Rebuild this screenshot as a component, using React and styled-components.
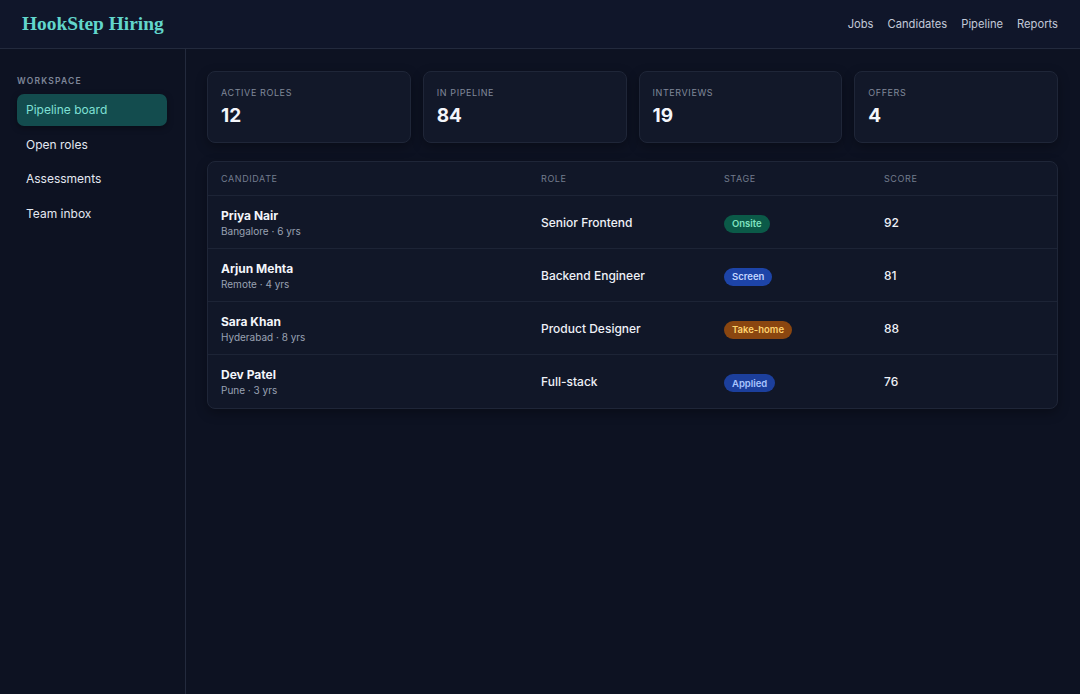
import React from 'react';
import styled, { createGlobalStyle } from 'styled-components';

const GlobalStyle = createGlobalStyle`
  html, body {
    margin: 0;
    padding: 0;
    background: #0d1222;
    font-family: Inter, "Noto Sans", sans-serif;
    color: #e8ecf4;
  }
  * { box-sizing: border-box; }
`;

const STATS = [
  { label: 'Active roles', value: '12' },
  { label: 'In pipeline', value: '84' },
  { label: 'Interviews', value: '19' },
  { label: 'Offers', value: '4' },
];

const CANDIDATES = [
  { name: 'Priya Nair', meta: 'Bangalore · 6 yrs', role: 'Senior Frontend', stage: 'Onsite', score: 92 },
  { name: 'Arjun Mehta', meta: 'Remote · 4 yrs', role: 'Backend Engineer', stage: 'Screen', score: 81 },
  { name: 'Sara Khan', meta: 'Hyderabad · 8 yrs', role: 'Product Designer', stage: 'Take-home', score: 88 },
  { name: 'Dev Patel', meta: 'Pune · 3 yrs', role: 'Full-stack', stage: 'Applied', score: 76 },
];

const STAGE_COLORS = {
  Onsite: { bg: '#0b5a48', fg: '#7fe3c0' },
  Screen: { bg: '#1d44a8', fg: '#c3d6ff' },
  'Take-home': { bg: '#8a4610', fg: '#ffd36e' },
  Applied: { bg: '#1c3f9c', fg: '#a9c5ff' },
};

const NAV = ['Pipeline board', 'Open roles', 'Assessments', 'Team inbox'];

const App = () => {
  return (
    <>
      <GlobalStyle />
      <Page>
        <TopBar>
          <Brand>HookStep Hiring</Brand>
          <TopNav>
            <TopLink>Jobs</TopLink>
            <TopLink>Candidates</TopLink>
            <TopLink>Pipeline</TopLink>
            <TopLink>Reports</TopLink>
          </TopNav>
        </TopBar>

        <Body>
          <Sidebar>
            <SideLabel>Workspace</SideLabel>
            {NAV.map((item, i) => (
              <SideItem key={item} $active={i === 0}>{item}</SideItem>
            ))}
          </Sidebar>

          <Main>
            <StatGrid>
              {STATS.map((s) => (
                <StatCard key={s.label}>
                  <StatLabel>{s.label}</StatLabel>
                  <StatValue>{s.value}</StatValue>
                </StatCard>
              ))}
            </StatGrid>

            <Table>
              <HeadRow>
                <HeadCell>Candidate</HeadCell>
                <HeadCell>Role</HeadCell>
                <HeadCell>Stage</HeadCell>
                <HeadCell>Score</HeadCell>
              </HeadRow>
              {CANDIDATES.map((c) => (
                <Row key={c.name}>
                  <div>
                    <Name>{c.name}</Name>
                    <Meta>{c.meta}</Meta>
                  </div>
                  <Cell>{c.role}</Cell>
                  <div>
                    <Badge $stage={c.stage}>{c.stage}</Badge>
                  </div>
                  <Cell>{c.score}</Cell>
                </Row>
              ))}
            </Table>
          </Main>
        </Body>
      </Page>
    </>
  );
};

const Page = styled.div`
  min-height: 694px;
  display: flex;
  flex-direction: column;
`;

const TopBar = styled.header`
  height: 49px;
  display: flex;
  align-items: center;
  justify-content: space-between;
  padding: 0 22px;
  background: #10162a;
  border-bottom: 1px solid #232a3d;
`;

const Brand = styled.div`
  font-family: "Liberation Serif", "DejaVu Serif", serif;
  font-weight: 700;
  font-size: 19.4px;
  color: #62d6cc;
`;

const TopNav = styled.nav`
  display: flex;
  gap: 14px;
`;

const TopLink = styled.a`
  font-size: 11.2px;
  color: #c2c9d8;
`;

const Body = styled.div`
  flex: 1;
  display: flex;
`;

const Sidebar = styled.aside`
  width: 186px;
  flex-shrink: 0;
  border-right: 1px solid #232a3d;
  padding: 27px 18px 0 17px;
  display: flex;
  flex-direction: column;
  gap: 2.5px;
  min-height: 645px;
`;

const SideLabel = styled.div`
  font-size: 8.5px;
  font-weight: 600;
  letter-spacing: 1.2px;
  text-transform: uppercase;
  color: #7e8699;
  margin-bottom: 5px;
`;

const SideItem = styled.div`
  height: 32px;
  display: flex;
  align-items: center;
  padding: 0 9px;
  border-radius: 7px;
  font-size: 12px;
  color: ${(p) => (p.$active ? '#7fe0d5' : '#e3e8f1')};
  background: ${(p) => (p.$active ? '#134c4e' : 'transparent')};
  box-shadow: ${(p) => (p.$active ? '0 2px 6px rgba(0,0,0,0.35)' : 'none')};
`;

const Main = styled.main`
  flex: 1;
  padding: 22px 22px 0 21px;
  display: flex;
  flex-direction: column;
  gap: 18px;
`;

const StatGrid = styled.div`
  display: grid;
  grid-template-columns: repeat(4, 1fr);
  gap: 12px;
`;

const StatCard = styled.div`
  height: 72px;
  padding: 15px 13px 0;
  background: #121829;
  border: 1px solid #1f2638;
  border-radius: 8px;
  box-shadow: 0 4px 12px rgba(0,0,0,0.3);
`;

const StatLabel = styled.div`
  font-size: 9px;
  letter-spacing: 0.6px;
  text-transform: uppercase;
  color: #808899;
`;

const StatValue = styled.div`
  margin-top: 6px;
  font-size: 19px;
  font-weight: 700;
  color: #f4f6fb;
`;

const Table = styled.div`
  background: #111728;
  border: 1px solid #1f2638;
  border-radius: 8px;
  box-shadow: 0 4px 12px rgba(0,0,0,0.3);
  overflow: hidden;
`;

const columns = `
  display: grid;
  grid-template-columns: 320px 183px 160px 1fr;
  align-items: center;
  padding: 0 13px;
`;

const HeadRow = styled.div`
  ${columns}
  height: 34px;
  border-bottom: 1px solid #1d2436;
`;

const HeadCell = styled.div`
  font-size: 9px;
  letter-spacing: 0.6px;
  text-transform: uppercase;
  color: #737c8e;
`;

const Row = styled.div`
  ${columns}
  height: 53px;
  border-bottom: 1px solid #1d2436;
  &:last-child { border-bottom: none; }
`;

const Name = styled.div`
  font-size: 12px;
  font-weight: 700;
  color: #f3f5fa;
`;

const Meta = styled.div`
  margin-top: 2px;
  font-size: 10px;
  color: #9aa2b3;
`;

const Cell = styled.div`
  font-size: 12px;
  font-weight: 500;
  color: #eef1f7;
`;

const Badge = styled.span`
  display: inline-flex;
  align-items: center;
  height: 18px;
  padding: 0 8px;
  border-radius: 9px;
  font-size: 9.5px;
  font-weight: 600;
  background: ${(p) => STAGE_COLORS[p.$stage].bg};
  color: ${(p) => STAGE_COLORS[p.$stage].fg};
`;

export default App;
